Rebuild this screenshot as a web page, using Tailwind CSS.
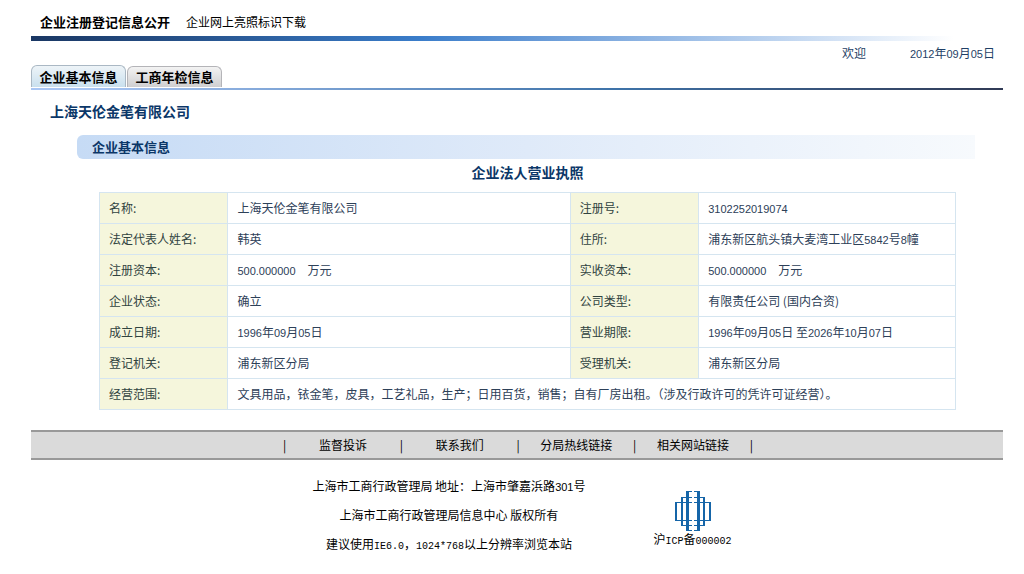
<!DOCTYPE html>
<html lang="zh-CN">
<head>
<meta charset="utf-8">
<title>企业注册登记信息公开</title>
<script src="https://cdn.jsdelivr.net/npm/@tailwindcss/browser@4"></script>
</head>
<body class="bg-white pl-[31px] pr-[21px] pb-4 font-['Noto_Sans_CJK_SC',sans-serif] text-xs text-black">
<header>
  <nav class="flex h-9 items-center gap-4 pt-2 pl-[9px]">
    <a href="#" class="text-[13px] font-bold">企业注册登记信息公开</a>
    <a href="#">企业网上亮照标识下载</a>
  </nav>
  <div class="h-[5px] bg-linear-to-r from-[#1a3763] via-[#3a7dca] via-40% to-white to-95%"></div>
  <div class="flex h-6 items-center justify-end gap-[44px] pr-2 text-[#1f3f66]">
    <span>欢迎</span>
    <span><span class="font-['Liberation_Sans'] text-[11px]">2012</span>年<span class="font-['Liberation_Sans'] text-[11px]">09</span>月<span class="font-['Liberation_Sans'] text-[11px]">05</span>日</span>
  </div>
</header>

<div class="flex h-[23px] items-end gap-px pb-px">
  <button type="button" class="h-[22px] w-[95px] rounded-t-md border border-b-0 border-[#aab8c4] bg-linear-to-b from-[#eef4f8] to-[#c9e0ee] text-[13px] leading-5 font-bold">企业基本信息</button>
  <button type="button" class="h-[21px] w-[95px] rounded-t-md border border-b-0 border-[#b4b4b8] bg-linear-to-b from-[#f3f3f3] to-[#cfcfd1] text-[13px] leading-5 font-bold">工商年检信息</button>
</div>
<div class="h-0.5 bg-linear-to-r from-[#a9c6f4] from-5% via-[#3e73a9] via-60% to-[#303a55]"></div>

<main class="text-[#2d4058]">
  <h1 class="flex h-[45px] items-center pb-1 pl-[19px] text-sm font-bold text-[#0b3768]">上海天伦金笔有限公司</h1>
  <section class="mr-[28px] ml-[46px]">
    <h2 class="flex h-6 items-center rounded-l-md bg-linear-to-r from-[#c6dbf5] via-[#dfeaf9] to-[#f7fafd] pl-[15px] text-[13px] font-bold text-[#0b3768]">企业基本信息</h2>
    <div class="mr-[19px] ml-[22px]">
      <table class="w-full table-fixed border-collapse text-left">
        <caption class="h-[33px] text-sm leading-[26px] font-bold text-[#0b3768]">企业法人营业执照</caption>
        <colgroup><col class="w-[15%]"><col class="w-[40%]"><col class="w-[15%]"><col class="w-[30%]"></colgroup>
        <tbody>
          <tr class="h-[31px]">
            <th scope="row" class="border border-[#d5e5f0] bg-[#f5f6dc] px-[9px] font-normal text-[#30433f]">名称:</th>
            <td class="border border-[#d5e5f0] px-[9px]">上海天伦金笔有限公司</td>
            <th scope="row" class="border border-[#d5e5f0] bg-[#f5f6dc] px-[9px] font-normal text-[#30433f]">注册号:</th>
            <td class="border border-[#d5e5f0] px-[9px]"><span class="font-['Liberation_Sans'] text-[11px]">3102252019074</span></td>
          </tr>
          <tr class="h-[31px]">
            <th scope="row" class="border border-[#d5e5f0] bg-[#f5f6dc] px-[9px] font-normal text-[#30433f]">法定代表人姓名:</th>
            <td class="border border-[#d5e5f0] px-[9px]">韩英</td>
            <th scope="row" class="border border-[#d5e5f0] bg-[#f5f6dc] px-[9px] font-normal text-[#30433f]">住所:</th>
            <td class="border border-[#d5e5f0] px-[9px]">浦东新区航头镇大麦湾工业区<span class="font-['Liberation_Sans'] text-[11px]">5842</span>号<span class="font-['Liberation_Sans'] text-[11px]">8</span>幢</td>
          </tr>
          <tr class="h-[31px]">
            <th scope="row" class="border border-[#d5e5f0] bg-[#f5f6dc] px-[9px] font-normal text-[#30433f]">注册资本:</th>
            <td class="border border-[#d5e5f0] px-[9px]"><span class="mr-3 font-['Liberation_Sans'] text-[11px]">500.000000</span>万元</td>
            <th scope="row" class="border border-[#d5e5f0] bg-[#f5f6dc] px-[9px] font-normal text-[#30433f]">实收资本:</th>
            <td class="border border-[#d5e5f0] px-[9px]"><span class="mr-3 font-['Liberation_Sans'] text-[11px]">500.000000</span>万元</td>
          </tr>
          <tr class="h-[31px]">
            <th scope="row" class="border border-[#d5e5f0] bg-[#f5f6dc] px-[9px] font-normal text-[#30433f]">企业状态:</th>
            <td class="border border-[#d5e5f0] px-[9px]">确立</td>
            <th scope="row" class="border border-[#d5e5f0] bg-[#f5f6dc] px-[9px] font-normal text-[#30433f]">公司类型:</th>
            <td class="border border-[#d5e5f0] px-[9px]">有限责任公司 (国内合资)</td>
          </tr>
          <tr class="h-[31px]">
            <th scope="row" class="border border-[#d5e5f0] bg-[#f5f6dc] px-[9px] font-normal text-[#30433f]">成立日期:</th>
            <td class="border border-[#d5e5f0] px-[9px]"><span class="font-['Liberation_Sans'] text-[11px]">1996</span>年<span class="font-['Liberation_Sans'] text-[11px]">09</span>月<span class="font-['Liberation_Sans'] text-[11px]">05</span>日</td>
            <th scope="row" class="border border-[#d5e5f0] bg-[#f5f6dc] px-[9px] font-normal text-[#30433f]">营业期限:</th>
            <td class="border border-[#d5e5f0] px-[9px]"><span class="font-['Liberation_Sans'] text-[11px]">1996</span>年<span class="font-['Liberation_Sans'] text-[11px]">09</span>月<span class="font-['Liberation_Sans'] text-[11px]">05</span>日 至<span class="font-['Liberation_Sans'] text-[11px]">2026</span>年<span class="font-['Liberation_Sans'] text-[11px]">10</span>月<span class="font-['Liberation_Sans'] text-[11px]">07</span>日</td>
          </tr>
          <tr class="h-[31px]">
            <th scope="row" class="border border-[#d5e5f0] bg-[#f5f6dc] px-[9px] font-normal text-[#30433f]">登记机关:</th>
            <td class="border border-[#d5e5f0] px-[9px]">浦东新区分局</td>
            <th scope="row" class="border border-[#d5e5f0] bg-[#f5f6dc] px-[9px] font-normal text-[#30433f]">受理机关:</th>
            <td class="border border-[#d5e5f0] px-[9px]">浦东新区分局</td>
          </tr>
          <tr class="h-[31px]">
            <th scope="row" class="border border-[#d5e5f0] bg-[#f5f6dc] px-[9px] font-normal text-[#30433f]">经营范围:</th>
            <td colspan="3" class="border border-[#d5e5f0] px-[9px]">文具用品，铱金笔，皮具，工艺礼品，生产；日用百货，销售；自有厂房出租。（涉及行政许可的凭许可证经营）。</td>
          </tr>
        </tbody>
      </table>
    </div>
  </section>
</main>

<footer>
  <nav class="mt-5 flex h-[30px] items-center justify-center border-y-2 border-[#999] bg-[#dadada] pl-0.5">
    <div class="flex w-[470px] items-center">
      <span>|</span><a href="#" class="flex-1 text-center">监督投诉</a>
      <span>|</span><a href="#" class="flex-1 text-center">联系我们</a>
      <span>|</span><a href="#" class="flex-1 text-center">分局热线链接</a>
      <span>|</span><a href="#" class="flex-1 text-center">相关网站链接</a>
      <span>|</span>
    </div>
  </nav>
  <div class="flex justify-center gap-[68px] pt-[11px] pl-2.5">
    <div class="text-center leading-[29px]">
      <p>上海市工商行政管理局 地址：上海市肇嘉浜路<span class="font-['Liberation_Sans'] text-[11px] leading-none">301</span>号</p>
      <p>上海市工商行政管理局信息中心 版权所有</p>
      <p>建议使用<span class="font-['Liberation_Mono'] text-[10px] leading-none">IE6.0</span>，<span class="font-['Liberation_Mono'] text-[10px] leading-none">1024*768</span>以上分辨率浏览本站</p>
    </div>
    <a href="#" class="flex flex-col items-center pt-5">
      <svg class="block" width="36" height="40" viewBox="0 0 36 40" fill="#1565a8" aria-hidden="true">
        <path d="M11 0h3v40h-3zM22 0h3v40h-3zM6 6h2v28H6zM28 6h2v28h-2zM0 11h2v19H0zM34 11h2v19h-2z"/>
        <path d="M11 0h6v1h-6zM19 0h6v1h-6zM6 6h11v1H6zM19 6h11v1H19zM0 11h17v1H0zM19 11h17v1H19zM0 29h17v1H0zM19 29h17v1H19zM6 34h11v1H6zM19 34h11v1H19zM11 39h6v1h-6zM19 39h6v1h-6z"/>
      </svg>
      <span class="leading-4">沪<span class="font-['Liberation_Mono'] text-[10px] leading-none">ICP</span>备<span class="font-['Liberation_Mono'] text-[10px] leading-none">000002</span></span>
    </a>
  </div>
</footer>
</body>
</html>
